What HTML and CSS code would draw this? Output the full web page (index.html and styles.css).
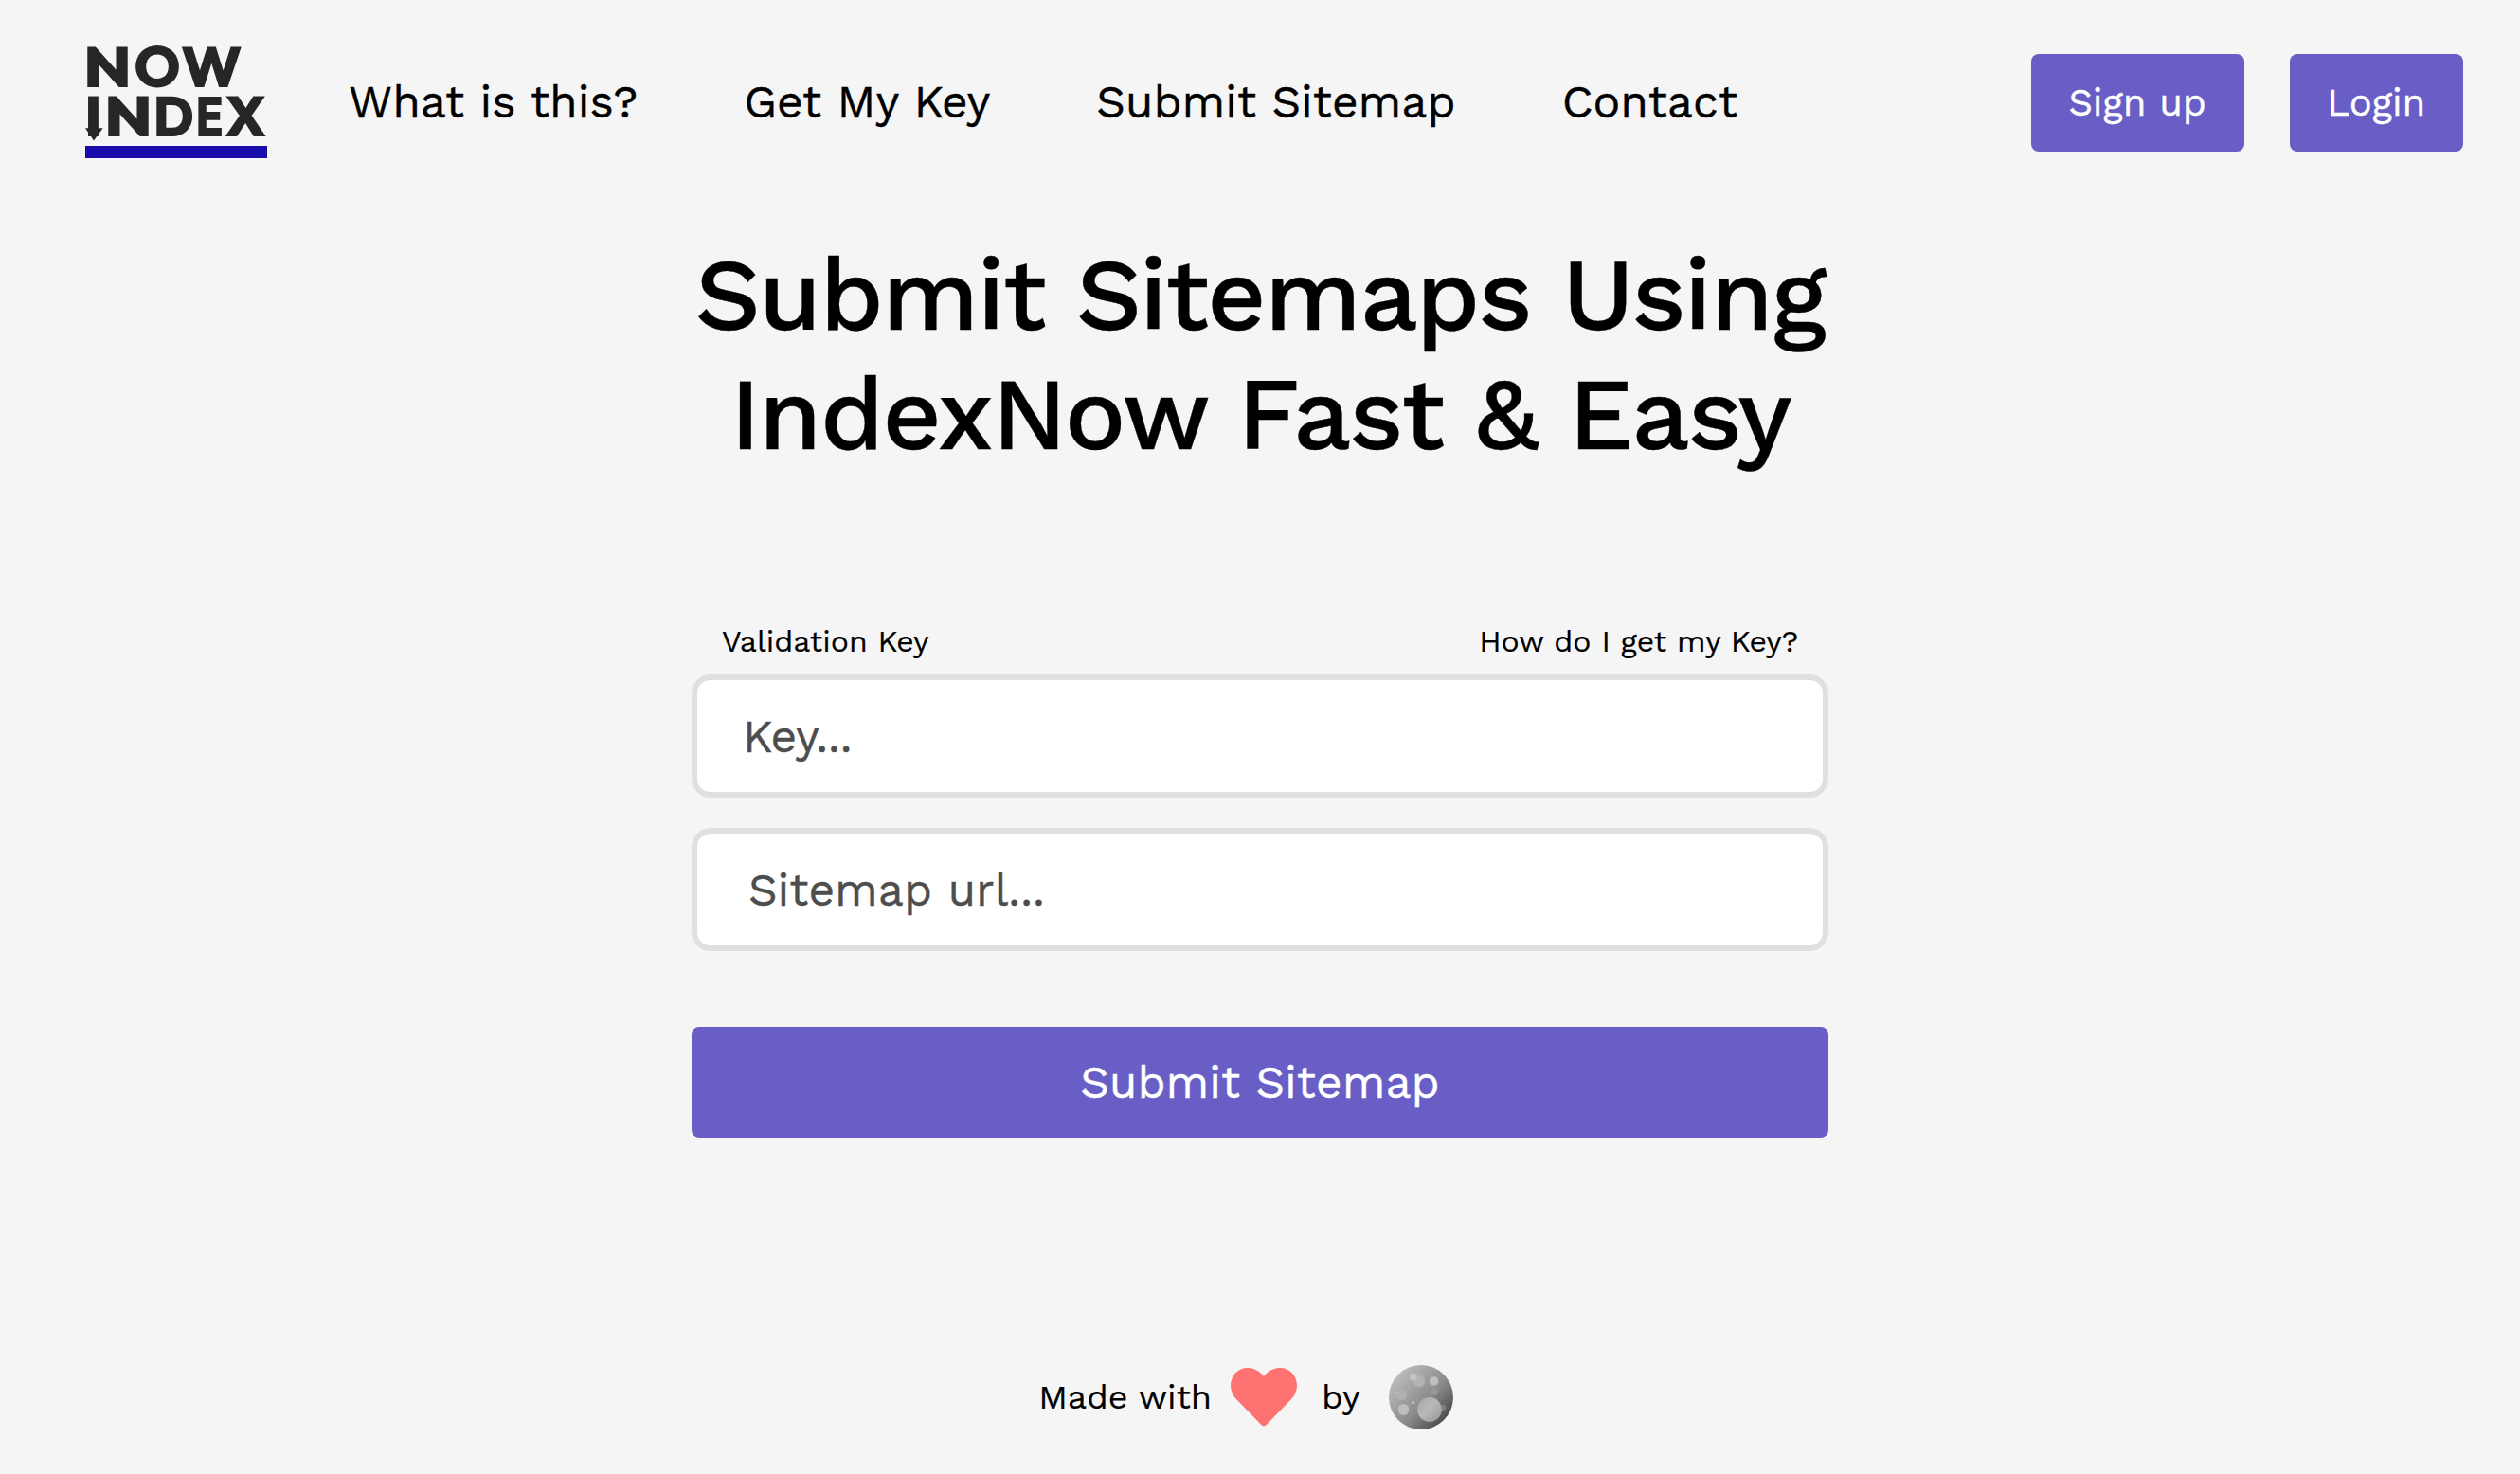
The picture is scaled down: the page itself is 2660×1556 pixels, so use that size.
FILE: index.html
```html
<!DOCTYPE html>
<html lang="en">
<head>
<meta charset="utf-8">
<title>NowIndex - Submit Sitemaps Using IndexNow</title>
<link rel="stylesheet" href="styles.css">
</head>
<body>
<header class="header">
  <a class="logo" href="#" aria-label="Now Index">
    <svg class="logo-mark" viewBox="0 0 192 119" width="192" height="119">
      <g class="logo-text">
        <text y="43.2"><tspan x="-2" textLength="51" lengthAdjust="spacingAndGlyphs">N</tspan><tspan x="51.4">O</tspan><tspan x="101" textLength="64.5" lengthAdjust="spacingAndGlyphs">W</tspan></text>
        <text y="94.7"><tspan x="-0.8">I</tspan><tspan x="20" textLength="51" lengthAdjust="spacingAndGlyphs">N</tspan><tspan x="71.7" textLength="42.9" lengthAdjust="spacingAndGlyphs">D</tspan><tspan x="116.4" textLength="29.2" lengthAdjust="spacingAndGlyphs">E</tspan><tspan x="147" textLength="44.3" lengthAdjust="spacingAndGlyphs">X</tspan></text>
      </g>
      <path class="logo-arrow" d="M0 86.300h18.700L9 99.500z"/>
      <rect class="logo-bar" y="105" width="192" height="13"/>
    </svg>
  </a>
  <nav class="nav">
    <a href="#">What is this?</a>
    <a href="#">Get My Key</a>
    <a href="#">Submit Sitemap</a>
    <a href="#">Contact</a>
  </nav>
  <div class="account">
    <a class="button" href="#">Sign up</a>
    <a class="button" href="#">Login</a>
  </div>
</header>
<main class="main">
  <h1 class="title">Submit Sitemaps Using<br>IndexNow Fast &amp; Easy</h1>
  <form class="form">
    <div class="labels">
      <label for="key">Validation Key</label>
      <a href="#">How do I get my Key?</a>
    </div>
    <input class="field" id="key" type="text" placeholder="Key...">
    <input class="field field-url" type="text" placeholder="Sitemap url...">
    <button class="submit" type="button">Submit Sitemap</button>
  </form>
</main>
<footer class="footer">
  <span>Made with</span>
  <svg class="heart" viewBox="0 0 70 62" width="70" height="62">
    <path d="M35 9C28 0 20 0 18 0C8 0 0 8 0 18.500C0 24 2 29 5.500 32.500L32.500 60.300Q35 62.500 37.500 60.300L64.500 32.500C68 29 70 24 70 18.500C70 8 62 0 52 0C50 0 42 0 35 9z"/>
  </svg>
  <span>by</span>
  <svg class="moon" viewBox="0 0 68 68" width="68" height="68">
    <defs>
      <linearGradient id="surface" x1="0.15" y1="0.15" x2="0.87" y2="0.83">
        <stop offset="0" stop-color="#bababa"/>
        <stop offset="0.6" stop-color="#8b8b8b"/>
        <stop offset="1" stop-color="#4e4e4e"/>
      </linearGradient>
      <linearGradient id="crater" x1="0.1" y1="0.1" x2="0.9" y2="0.9">
        <stop offset="0" stop-color="#aaa"/>
        <stop offset="0.45" stop-color="#b9b9b9"/>
        <stop offset="1" stop-color="#9b9b9b"/>
      </linearGradient>
    </defs>
    <circle cx="34" cy="34" r="34" fill="url(#surface)"/>
    <circle cx="32" cy="17" r="6" fill="#b4b4b4"/>
    <circle cx="25.700" cy="12.500" r="3.700" fill="#c4c4c4"/>
    <circle cx="47.500" cy="17" r="4.800" fill="#bfbfbf"/>
    <circle cx="48" cy="28" r="3.700" fill="#989898"/>
    <circle cx="13" cy="31.500" r="5.800" fill="#b0b0b0"/>
    <circle cx="8.500" cy="28.800" r="1.600" fill="#bebebe"/>
    <circle cx="15.500" cy="47" r="5.900" fill="#bebebe"/>
    <circle cx="25.700" cy="39.700" r="1.600" fill="#c4c4c4"/>
    <circle cx="57" cy="45" r="3.300" fill="#7e7e7e"/>
    <circle cx="43" cy="47" r="12.900" fill="url(#crater)"/>
  </svg>
</footer>
</body>
</html>
```
FILE: styles.css
```css
* {
  box-sizing: border-box;
}

body {
  margin: 0;
  min-height: 1556px;
  display: flex;
  flex-direction: column;
  background: #f5f5f5;
  color: #000;
  font-family: "Work Sans", Inter, sans-serif;
  -webkit-text-stroke: 0.4px currentColor;
}

a {
  color: inherit;
  text-decoration: none;
}

.header {
  display: flex;
  align-items: center;
  padding: 49px 60px 0 90px;
}

.logo-mark {
  display: block;
  overflow: visible;
}

.logo-text {
  font: 800 60.4px Outfit, Lato, sans-serif;
  fill: #262626;
  -webkit-text-stroke: 0;
}

.logo-arrow {
  fill: #262626;
}

.logo-bar {
  fill: #180cab;
}

.nav {
  display: flex;
  gap: 112px;
  margin-left: 86px;
  padding-bottom: 2px;
  font-size: 48px;
  white-space: nowrap;
}

.account {
  display: flex;
  gap: 48px;
  margin-left: auto;
}

.button {
  padding: 28px 39.7px;
  border-radius: 8px;
  background: #685ec6;
  color: #fff;
  font-size: 40px;
  line-height: 47px;
}

.main {
  display: flex;
  flex-direction: column;
  align-items: center;
  padding-top: 80px;
}

.title {
  margin: 0;
  font-size: 108px;
  font-weight: 500;
  line-height: 126px;
  letter-spacing: -2px;
  text-align: center;
}

.form {
  display: flex;
  flex-direction: column;
  width: 1200px;
  margin-top: 158px;
}

.labels {
  display: flex;
  justify-content: space-between;
  padding: 0 32px;
  margin-bottom: 16px;
  font-size: 32px;
  line-height: 38px;
  -webkit-text-stroke-width: 0.2px;
}

.field {
  height: 130px;
  margin: 0 0 32px;
  padding: 0 48px;
  border: 6px solid #e0e0e0;
  border-radius: 20px;
  background: #fff;
  font-family: inherit;
  font-size: 48px;
}

.field-url {
  padding: 0 54px;
}

.field::placeholder {
  color: #4d4d4d;
  opacity: 1;
}

.submit {
  height: 117px;
  margin-top: 48px;
  padding: 0;
  border: 0;
  border-radius: 8px;
  background: #685ec6;
  color: #fff;
  font-family: inherit;
  font-size: 48px;
}

.footer {
  display: flex;
  align-items: center;
  justify-content: center;
  margin-top: auto;
  padding: 0 30px 47px 0;
  font-size: 36px;
  -webkit-text-stroke-width: 0.2px;
}

.heart {
  margin: 0 26px 0 20px;
  fill: #ff7272;
}

.moon {
  margin-left: 30px;
}
```
